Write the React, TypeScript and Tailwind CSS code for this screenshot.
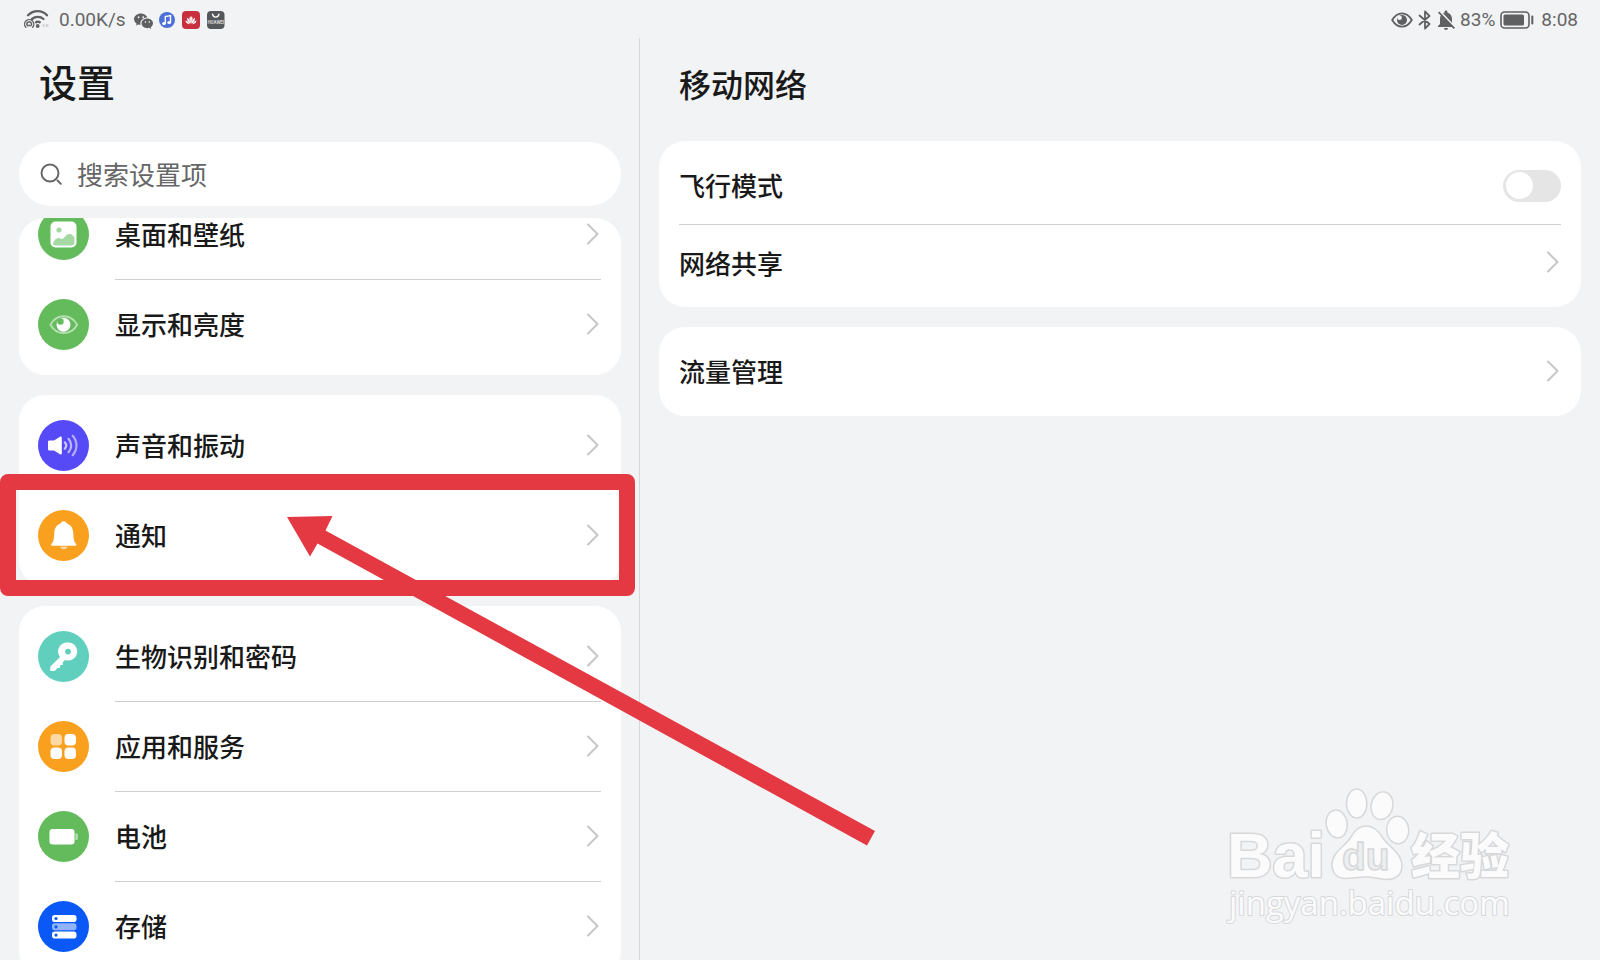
import React from 'react';
import { BsWechat } from 'react-icons/bs';
import { MdNotificationsOff } from 'react-icons/md';

type Item = {
  label: string;
  color: string;
  icon: React.ReactNode;
  highlighted?: boolean;
};

const WallpaperIcon = () => (
  <>
    <rect x="12.5" y="12.5" width="26" height="26" rx="5" fill="#fff" />
    <circle cx="21" cy="21" r="2.6" fill="#a5d8a3" />
    <path
      d="M15 34.5c1-3.500 3.500-6 6-5.500 2 .3 2.500 1.600 4 .6 2.200-1.500 3.500-4.600 6.500-4.600 2.600 0 3.800 2 4.900 3.500v5c0 2-1 3-3 3H17.500c-1.500 0-2.500-.8-2.500-2z"
      fill="#a5d8a3"
    />
  </>
);

const DisplayIcon = () => (
  <>
    <path
      d="M12.500 25.700c3-5.500 7.800-8.400 13.300-8.400s10.300 2.900 13.300 8.400c-3 5.500-7.800 8.400-13.300 8.400s-10.300-2.900-13.300-8.400z"
      fill="none"
      stroke="#b4deb2"
      strokeWidth="2"
      strokeLinejoin="round"
    />
    <circle cx="25.500" cy="25.700" r="7" fill="#fff" />
    <circle cx="22.500" cy="22.500" r="3.200" fill="#64bb5c" />
  </>
);

const SoundIcon = () => (
  <>
    <path
      d="M11.500 20.500h4.500l6-3.800c.9-.5 1.800 0 1.800.9v15.800c0 .9-.9 1.400-1.800.9L16 30.500h-4.500c-1 0-1.500-.6-1.500-1.500v-7c0-.9.500-1.500 1.500-1.500z"
      fill="#fff"
    />
    <g fill="none" strokeLinecap="round" strokeWidth="2.200">
      <path d="M26.800 22.300c1.800 2 1.800 4.400 0 6.400" stroke="#cbc7fc" />
      <path d="M30.500 18.800c3.600 3.900 3.600 9.500 0 13.400" stroke="#bdb8fc" />
      <path d="M34.700 15.800c5 5.700 5 13.700 0 19.400" stroke="#b3aefb" />
    </g>
  </>
);

const BellIcon = () => (
  <>
    <path d="M22 36.500h7.500c-.6 1.900-2 3-3.700 3s-3.200-1.100-3.800-3z" fill="#fcd49b" />
    <path
      d="M25.700 11.300c1.600 0 2.700.9 3.300 2.300 4.300 1.500 6 5 6.300 9.700.3 5 .4 8.500 2.700 10.500.8.800.5 2-.7 2H14.200c-1.200 0-1.500-1.200-.7-2 2.300-2 2.400-5.500 2.700-10.500.3-4.700 2-8.200 6.300-9.700.5-1.400 1.600-2.300 3.200-2.300z"
      fill="#fff"
    />
  </>
);

const KeyIcon = () => (
  <path
    fillRule="evenodd"
    d="M30 11.500a9 9 0 1 1-2.800 17.500L24.500 31.600l.6 2.200-2.800.3-.3 2.600-2.500.4-2.300 2.400c-.3.300-.7.500-1.100.5H13.200c-.6 0-1-.4-1-1v-2.700c0-.4.200-.8.500-1.100L22 25.900A9 9 0 0 1 30 11.500zm0 6.200a2.900 2.900 0 1 0 0 5.800 2.900 2.900 0 0 0 0-5.800z"
    fill="#fff"
  />
);

const AppsIcon = () => (
  <>
    <rect x="12.500" y="13" width="11.500" height="11.500" rx="4" fill="#fcd8a2" />
    <rect x="26.500" y="13" width="11.500" height="11.500" rx="4" fill="#fff" />
    <rect x="12.500" y="26.500" width="11.500" height="11.500" rx="4" fill="#fff" />
    <rect x="26.500" y="26.500" width="11.500" height="11.500" rx="4" fill="#fff" />
  </>
);

const BatteryIcon = () => (
  <>
    <rect x="11.500" y="18" width="25" height="15.500" rx="3" fill="#fff" />
    <path d="M37.300 22.500h1.200c.9 0 1.300.5 1.300 1.200v4.100c0 .7-.4 1.200-1.300 1.200h-1.200z" fill="#b4deb2" />
  </>
);

const StorageIcon = () => (
  <>
    <rect x="14" y="14" width="24.500" height="7" rx="2.800" fill="#fff" />
    <rect x="14" y="22.300" width="24.500" height="7" rx="2.800" fill="#90b3fb" />
    <rect x="14" y="30.600" width="24.500" height="7" rx="2.800" fill="#fff" />
    <g fill="#0a59f7">
      <circle cx="18" cy="17.500" r="1.600" />
      <circle cx="18" cy="25.800" r="1.600" />
      <circle cx="18" cy="34.100" r="1.600" />
    </g>
  </>
);

const displayItems: Item[] = [
  { label: '桌面和壁纸', color: '#64bb5c', icon: <WallpaperIcon /> },
  { label: '显示和亮度', color: '#64bb5c', icon: <DisplayIcon /> },
];

const soundItems: Item[] = [
  { label: '声音和振动', color: '#564af7', icon: <SoundIcon /> },
  { label: '通知', color: '#f9a01e', icon: <BellIcon />, highlighted: true },
];

const systemItems: Item[] = [
  { label: '生物识别和密码', color: '#61cfbe', icon: <KeyIcon /> },
  { label: '应用和服务', color: '#f9a01e', icon: <AppsIcon /> },
  { label: '电池', color: '#64bb5c', icon: <BatteryIcon /> },
  { label: '存储', color: '#0a59f7', icon: <StorageIcon /> },
];

const Chevron = () => (
  <svg className="h-6 w-4 shrink-0" viewBox="0 0 16 24" fill="none" aria-hidden="true">
    <path
      d="M3 2.500 12.500 12 3 21.500"
      stroke="#c6c6c6"
      strokeWidth="2"
      strokeLinecap="round"
      strokeLinejoin="round"
    />
  </svg>
);

const SettingsRow = ({ item, divided }: { item: Item; divided: boolean }) => (
  <li className="relative shrink-0">
    <a href="#" className="flex h-[90px] items-center gap-[26px] pr-5 pl-[19px]">
      <svg className="size-[51px] shrink-0" viewBox="0 0 51 51" aria-hidden="true">
        <circle cx="25.5" cy="25.5" r="25.5" fill={item.color} />
        {item.icon}
      </svg>
      <span
        className={`flex h-full flex-1 items-center justify-between border-t pb-[2px] leading-7 ${
          divided ? 'border-[#d0d0d0]' : 'border-transparent'
        }`}
      >
        {item.label}
        <Chevron />
      </span>
    </a>
    {item.highlighted && (
      <span className="pointer-events-none absolute -top-4 -right-[14px] -bottom-4 -left-[19px] z-10 rounded-lg border-16 border-[#e43942]" />
    )}
  </li>
);

const SettingsCard = ({ items }: { items: Item[] }) => (
  <ul className="rounded-[26px] bg-white pt-[5px] pb-[6px]">
    {items.map((item, index) => (
      <SettingsRow key={item.label} item={item} divided={index > 0 && !item.highlighted} />
    ))}
  </ul>
);

const StatusBar = () => (
  <div className="flex h-[38px] shrink-0 items-center justify-between pt-[2px] pr-[22px] pl-6 font-['Roboto',sans-serif] text-[19px] font-normal text-[#666]">
    <div className="flex items-center">
      <svg className="mr-[9px] h-5 w-[26px]" viewBox="0 0 26 20" fill="none" aria-hidden="true">
        <g stroke="#5f6061" strokeWidth="2.300" strokeLinecap="round">
          <path d="M4 5.300c5.500-5.500 14-5.500 19 0" />
          <path d="M8 9c3.300-2.800 8.400-2.800 11.500 0" />
          <path d="M12 12.200c1.200-.8 2.600-.8 3.800 0" />
        </g>
        <circle cx="13.700" cy="16" r="1.900" fill="#5f6061" />
        <g stroke="#5f6061" strokeWidth="1.400" strokeLinecap="round">
          <path d="M1.800 17.300a4.600 4.600 0 1 1 6.800 0" />
          <path d="M3.500 15.700a2.300 2.300 0 1 1 3.400 0" />
        </g>
        <circle cx="5.200" cy="15.500" r="1.100" fill="#5f6061" />
        <path d="M20.500 13.500 18 15.500l2.500 2zM22 13.500l3 2-3 2z" fill="#c9cacb" />
      </svg>
      <span className="mr-2">0.00K/s</span>
      <BsWechat className="mr-[6px] size-[19px] text-[#5f6061]" />
      <svg className="mr-[7px] size-4" viewBox="0 0 16 16" aria-hidden="true">
        <circle cx="8" cy="8" r="8" fill="#4d6fd8" />
        <path d="M6.300 11.300V4.600l5.200-1.100v6.700" fill="none" stroke="#fff" strokeWidth="1.400" />
        <ellipse cx="5" cy="11.500" rx="1.900" ry="1.500" fill="#fff" />
        <ellipse cx="10.200" cy="10.500" rx="1.900" ry="1.500" fill="#fff" />
      </svg>
      <svg className="mr-[7px] size-[18px]" viewBox="0 0 18 18" aria-hidden="true">
        <rect width="18" height="18" rx="4" fill="#c8303f" />
        <g fill="#fff">
          <path d="M9 13C6.800 10 7.200 6.500 8.300 5c.9 2 1.200 5 .7 8zM9 13c2.200-3 1.800-6.500.7-8-.9 2-1.200 5-.7 8z" />
          <path d="M8.300 12.800C5.500 11 4.800 8.500 5.200 6.500c1.800 1.300 3 3.700 3.100 6.300zM9.700 12.800c2.800-1.800 3.500-4.300 3.100-6.300-1.800 1.300-3 3.700-3.100 6.300z" />
          <path d="M7.700 13.300C5 13 3.600 11.500 3.400 9.600c2 .5 3.500 1.800 4.300 3.700zM10.300 13.300c2.700-.3 4.100-1.800 4.300-3.700-2 .5-3.500 1.800-4.300 3.700z" />
        </g>
      </svg>
      <svg className="size-[18px]" viewBox="0 0 18 18" aria-hidden="true">
        <rect width="17.500" height="18" rx="4" fill="#55585b" />
        <path d="M5.500 3.200c.8 4 5.700 4 6.500 0" fill="none" stroke="#fff" strokeWidth="1.300" strokeLinecap="round" />
        <text x="8.800" y="12.500" fontSize="4.500" fontWeight="700" fill="#d8d9da" textAnchor="middle">
          HUAWEI
        </text>
      </svg>
    </div>
    <div className="flex items-center">
      <svg className="mr-[5px] h-4 w-[22px]" viewBox="0 0 22 16" aria-hidden="true">
        <path
          d="M1.200 8C3.800 3.600 7.200 1.300 11 1.300S18.200 3.600 20.800 8c-2.600 4.400-6 6.700-9.800 6.700S3.800 12.400 1.200 8z"
          fill="none"
          stroke="#5f6061"
          strokeWidth="1.800"
        />
        <circle cx="11" cy="8" r="5" fill="#5f6061" />
        <circle cx="8.600" cy="5.700" r="2.300" fill="#f1f3f5" />
      </svg>
      <svg className="h-5 w-[14px]" viewBox="0 0 14 20" fill="none" aria-hidden="true">
        <path
          d="M1.500 5.500 11.500 14 7 18.500v-17L11.500 6 1.500 14.500"
          stroke="#5f6061"
          strokeWidth="1.800"
          strokeLinejoin="round"
          strokeLinecap="round"
        />
      </svg>
      <MdNotificationsOff className="mx-[2px] size-6 text-[#5f6061]" />
      <span className="mr-[5px]">83%</span>
      <svg className="mr-[7px] h-[18px] w-[34px]" viewBox="0 0 34 18" aria-hidden="true">
        <rect x="1" y="1" width="28" height="16" rx="3.500" fill="none" stroke="#5f6061" strokeWidth="1.600" />
        <rect x="3.500" y="3.500" width="20.500" height="11" rx="1.500" fill="#5f6061" />
        <rect x="31.300" y="4.500" width="2" height="9" rx="1" fill="#5f6061" />
      </svg>
      <span>8:08</span>
    </div>
  </div>
);

const Watermark = () => (
  <svg
    className="pointer-events-none absolute right-[60px] bottom-5 h-[170px] w-[340px]"
    viewBox="0 0 340 170"
    aria-hidden="true"
  >
    <g fill="#fbfbfc" stroke="#d7d8da" strokeWidth="1.500" strokeLinejoin="round">
      <ellipse cx="136.700" cy="54" rx="10.500" ry="14" transform="rotate(-8 136.700 54)" />
      <ellipse cx="156.700" cy="33.500" rx="10.200" ry="14.500" />
      <ellipse cx="182" cy="35.700" rx="10.800" ry="14" transform="rotate(12 182 35.700)" />
      <ellipse cx="197.700" cy="60" rx="11" ry="13.800" transform="rotate(-4 197.700 60)" />
      <path d="M166 56c8 0 13 5.500 17 12 5 8 19 15 19 28 0 9-7 13.500-15 13.500-7 0-13-2.500-21-2.500s-13 1.500-20 1.500c-9 0-14-5.500-14-14 0-12 12-17.500 18-26 4-6.500 8-12.500 16-12.500z" />
      <g strokeWidth="3" paintOrder="stroke">
        <text x="27" y="107" fontFamily="Liberation Sans, sans-serif" fontSize="63" fontWeight="700">
          Bai
        </text>
        <text x="211" y="104" fontFamily="Noto Sans CJK SC, sans-serif" fontSize="49" fontWeight="900">
          经验
        </text>
        <text x="29" y="145" fontFamily="Open Sans, sans-serif" fontSize="33" strokeWidth="2">
          jingyan.baidu.com
        </text>
      </g>
      <text
        x="142"
        y="100"
        fontFamily="Liberation Sans, sans-serif"
        fontSize="39"
        fontWeight="700"
        fill="#eceef0"
      >
        du
      </text>
    </g>
  </svg>
);

const App = () => (
  <div className="relative flex h-screen flex-col overflow-hidden bg-[#f1f3f5] font-['Noto_Sans_CJK_SC',sans-serif] text-[26px] font-medium text-[#191919]">
    <StatusBar />
    <div className="flex min-h-0 flex-1">
      <aside className="w-2/5 border-r border-[#d6d8da] pr-[18px] pl-[19px]">
        <h1 className="flex h-[104px] items-start px-5 pt-[15px] text-[38px] leading-[56px]">设置</h1>
        <label className="flex h-16 items-center gap-[14px] rounded-full bg-white px-[21px]">
          <svg className="size-[23px] shrink-0" viewBox="0 0 23 23" fill="none" aria-hidden="true">
            <circle cx="10" cy="10" r="8.500" stroke="#666" strokeWidth="1.900" />
            <path d="m17.500 17.500 3.300 3.300" stroke="#666" strokeWidth="1.900" strokeLinecap="round" />
          </svg>
          <input
            type="text"
            aria-label="搜索设置项"
            placeholder="搜索设置项"
            className="w-full bg-transparent pb-[2px] font-normal outline-none placeholder:text-[#666]"
          />
        </label>
        <nav className="mt-3 flex flex-col gap-5">
          {/* first card is partly scrolled away, its rows are cut at the top */}
          <ul className="flex h-[157px] flex-col justify-end overflow-hidden rounded-[26px] bg-white pb-[6px]">
            {displayItems.map((item, index) => (
              <SettingsRow key={item.label} item={item} divided={index > 0} />
            ))}
          </ul>
          <SettingsCard items={soundItems} />
          <SettingsCard items={systemItems} />
        </nav>
      </aside>
      <main className="flex-1 px-[19px]">
        <h2 className="flex h-[103px] items-start px-5 pt-[19px] text-[32px] leading-[52px]">移动网络</h2>
        <section className="flex flex-col gap-5">
          <div className="rounded-[26px] bg-white px-5 py-[6px]">
            <label className="flex h-[77px] items-center justify-between">
              <span className="pb-[2px]">飞行模式</span>
              <input
                type="checkbox"
                role="switch"
                className="flex h-8 w-[58px] appearance-none items-center rounded-full bg-[#e5e5e5] px-[3px] before:size-[27px] before:rounded-full before:bg-white checked:justify-end checked:bg-[#0a59f7]"
              />
            </label>
            <a
              href="#"
              className="flex h-[77px] items-center justify-between border-t border-[#d0d0d0] pb-[2px]"
            >
              网络共享
              <Chevron />
            </a>
          </div>
          <div className="rounded-[26px] bg-white px-5 py-[6px]">
            <a href="#" className="flex h-[77px] items-center justify-between pb-[2px]">
              流量管理
              <Chevron />
            </a>
          </div>
        </section>
      </main>
    </div>
    <svg
      className="pointer-events-none absolute top-0 left-0 z-20 h-[960px] w-[1600px]"
      viewBox="0 0 1600 960"
      aria-hidden="true"
    >
      <path d="M287 517l45.500-1-7 14.500L875 831l-8 14.500L317.500 543.500l-7.500 13z" fill="#e43942" />
    </svg>
    <Watermark />
  </div>
);

export default App;
